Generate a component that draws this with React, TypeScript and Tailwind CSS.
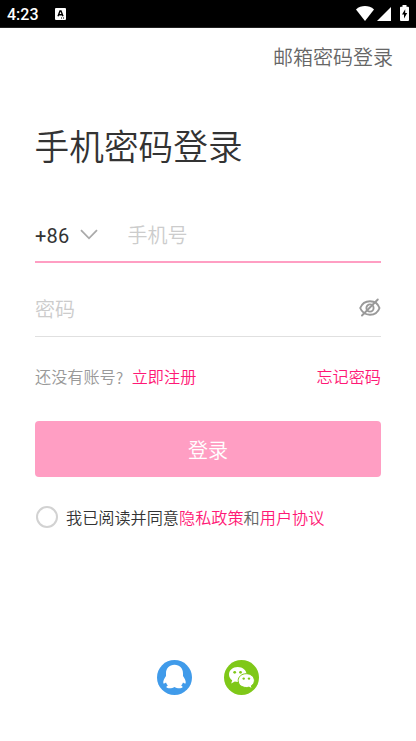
import { useState } from 'react';

function StatusBar() {
  return (
    <div className="h-7 bg-black border-b border-[#222222] flex items-center text-white">
      <span className="ml-[7px] w-[34px] pt-0.5 text-[16px] leading-none font-medium font-[Roboto,sans-serif]">4:23</span>
      <svg className="ml-[14px] mt-px" width="11" height="12" viewBox="0 0 11 12">
        <rect width="11" height="12" rx="1" fill="#fff" />
        <path d="M3 8.200 5 3h1l2 5.200M4 6.700h3" fill="none" stroke="#000" strokeWidth="1.400" />
        <path d="M6 10h1M8 10h1" stroke="#000" strokeWidth="1" />
      </svg>
      <svg className="ml-auto -mt-px" width="18" height="15" viewBox="0 0 18 15">
        <path d="M0 3.400C5.200-1 12.800-1 18 3.400L9 15z" fill="#fff" />
      </svg>
      <svg className="ml-[3px]" width="14" height="14" viewBox="0 0 14 14">
        <path d="M14 0v14H0z" fill="#fff" />
      </svg>
      <svg className="ml-[9px] mr-[7px] -mt-0.5" width="9" height="16" viewBox="0 0 9 16">
        <path d="M2.500 0h4v1.700H8a1 1 0 0 1 1 1V15a1 1 0 0 1-1 1H1a1 1 0 0 1-1-1V2.700a1 1 0 0 1 1-1h1.500z" fill="#fff" />
        <path d="M5.200 4.300 2 9.500h2v4L7.200 8H5.200z" fill="#000" />
      </svg>
    </div>
  );
}

function EyeOffIcon() {
  return (
    <svg width="22" height="20" viewBox="0 0 22 20" fill="none" stroke="#999999" strokeWidth="1.900" strokeLinecap="round">
      <path d="M1.200 10C3 5.500 6.800 3.200 11 3.200S19 5.500 20.500 10C19 14.500 15.200 16.700 11 16.700S3 14.500 1.200 10z" />
      <circle cx="11" cy="10" r="3.600" />
      <path d="M3 17.500 18.800 1.500" />
    </svg>
  );
}

function QQIcon() {
  return (
    <svg width="35" height="35" viewBox="0 0 35 35">
      <circle cx="17.500" cy="17.500" r="17.500" fill="#409bea" />
      <path
        d="M17.500 4.800c-5.300 0-8.500 3.700-8.500 8.600v2.600c-1.600 2.300-3 4.700-2.700 7.100.2 1 1.600.4 2.700-.6.400 1.300 1 2.200 1.900 3.100-1.400.6-1.700 1.300-1.300 2 .9 1.200 6.200.9 7.900-.5 1.700 1.400 7 1.700 7.900.5.400-.7.100-1.400-1.300-2 .9-.9 1.500-1.800 1.900-3.100 1.100 1 2.500 1.600 2.700.6.300-2.400-1.100-4.800-2.700-7.100v-2.600c0-4.900-3.200-8.600-8.500-8.600z"
        fill="#fff"
      />
    </svg>
  );
}

function WechatIcon() {
  return (
    <svg width="35" height="35" viewBox="0 0 35 35">
      <circle cx="17.500" cy="17.500" r="17.500" fill="#7fc818" />
      <path d="M13.700 7C8.700 7 5 10.300 5 14.500c0 2.400 1.200 4.400 3.200 5.800l-1 3.300 3.600-2c1 .3 1.900.4 2.900.4 5 0 8.900-3.300 8.900-7.500S18.700 7 13.700 7z" fill="#fff" />
      <path d="M22.300 13.700c-4.700 0-8.100 3-8.100 6.900s3.400 6.900 8.100 6.900c.9 0 1.900-.1 2.700-.4l3.200 1.800-.9-3.100c1.900-1.200 3.100-3.100 3.100-5.200 0-3.900-3.500-6.900-8.100-6.900z" fill="#fff" stroke="#7fc818" strokeWidth="1" />
      <g fill="#7fc818">
        <circle cx="10.700" cy="12.300" r="1.400" />
        <circle cx="16.500" cy="12.300" r="1.400" />
        <circle cx="19.700" cy="18.600" r="1.200" />
        <circle cx="25" cy="18.600" r="1.200" />
      </g>
    </svg>
  );
}

export default function App() {
  const [phone, setPhone] = useState('');
  const [password, setPassword] = useState('');
  const [showPassword, setShowPassword] = useState(false);
  const [agreed, setAgreed] = useState(false);

  return (
    <div className="h-[741px] bg-white flex flex-col font-[Roboto,'Noto_Sans_CJK_SC',sans-serif] font-[350] text-[#333333]">
      <StatusBar />

      <header className="h-[58px] pt-0.5 pr-[23px] flex items-center justify-end">
        <button className="text-[20px] leading-none text-[#666666]">邮箱密码登录</button>
      </header>

      <main className="px-[35px]">
        <h1 className="mt-9 h-[50px] -ml-[0.500px] pt-0.5 flex items-center text-[34.700px] leading-none font-[350] whitespace-nowrap">手机密码登录</h1>

        <div className="mt-9 h-[55px] flex items-center border-b-2 border-[#ff9ec3]">
          <button className="flex items-center w-[92.500px] text-[20px] leading-none font-normal">
            <span className="w-[45px] pt-0.5 text-left tracking-[0.2px]">+86</span>
            <svg width="18" height="11" viewBox="0 0 18 11" fill="none" stroke="#aaaaaa" strokeWidth="1.800">
              <path d="M1 1.200 9 9.300l8-8.100" />
            </svg>
          </button>
          <input
            className="flex-1 min-w-0 h-10 pt-0.5 text-[20px] outline-none placeholder:text-[#cccccc]"
            placeholder="手机号"
            value={phone}
            onChange={(e) => setPhone(e.target.value)}
          />
        </div>

        <div className="mt-[18px] h-14 flex items-center border-b border-[#e0e0e0]">
          <input
            className="flex-1 min-w-0 h-10 pt-0.5 text-[20px] outline-none placeholder:text-[#cccccc]"
            type={showPassword ? 'text' : 'password'}
            placeholder="密码"
            value={password}
            onChange={(e) => setPassword(e.target.value)}
          />
          <button className="-mt-0.5" onClick={() => setShowPassword(!showPassword)}>
            <EyeOffIcon />
          </button>
        </div>

        <div className="mt-[30px] h-5 pt-0.5 flex items-center justify-between text-[16.150px] leading-none text-[#999999]">
          <p className="flex">
            <span>还没有账号</span>
            <span className="w-4 -mt-px font-['Noto_Sans_CJK_SC',sans-serif]">?</span>
            <button className="text-[#ff1876]">立即注册</button>
          </p>
          <button className="text-[#ff1876]">忘记密码</button>
        </div>

        <button className="mt-[34px] w-full h-14 pt-[3px] rounded-[4px] bg-[#ff9ec3] text-white text-[20px] leading-none">登录</button>

        <div className="mt-7 h-6 flex items-center text-[16.150px] leading-none whitespace-nowrap">
          <button
            className={`ml-px mr-2 size-[22px] rounded-full border-2 border-[#d2d2d2] ${agreed ? 'bg-[#ff9ec3]' : 'bg-white'}`}
            onClick={() => setAgreed(!agreed)}
          />
          <p className="pt-1 flex">
            <span>我已阅读并同意</span>
            <button className="text-[#ff1876]">隐私政策</button>
            <span className="text-[#666666]">和</span>
            <button className="text-[#ff1876]">用户协议</button>
          </p>
        </div>
      </main>

      <footer className="mt-auto mb-[46px] flex justify-center gap-8">
        <button><QQIcon /></button>
        <button><WechatIcon /></button>
      </footer>
    </div>
  );
}
